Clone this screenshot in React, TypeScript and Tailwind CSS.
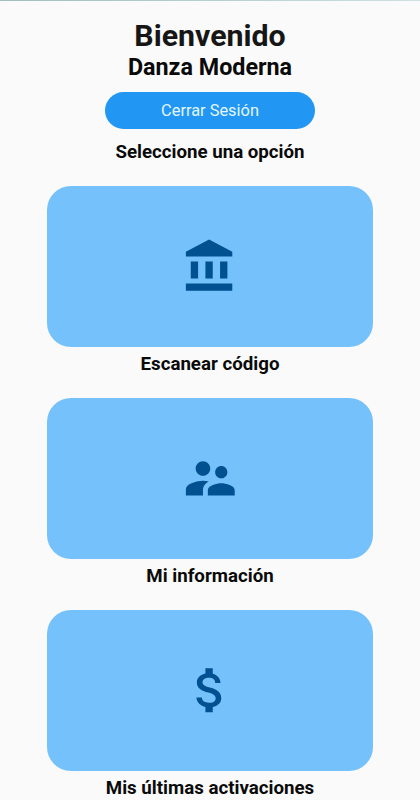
const options = [
  {
    label: 'Escanear código',
    icon: 'M4 10v7h3v-7H4zm6 0v7h3v-7h-3zM2 22h19v-3H2v3zm14-12v7h3v-7h-3zm-4.5-9L2 6v2h19V6l-9.5-5z',
  },
  {
    label: 'Mi información',
    icon: 'M16.5 12c1.38 0 2.49-1.12 2.49-2.5S17.88 7 16.5 7C15.12 7 14 8.12 14 9.5s1.12 2.5 2.5 2.5zM9 11c1.66 0 2.99-1.34 2.99-3S10.66 5 9 5C7.34 5 6 6.34 6 8s1.34 3 3 3zm7.5 3c-1.83 0-5.5.92-5.5 2.75V19h11v-2.25c0-1.83-3.67-2.75-5.5-2.75zM9 13c-2.33 0-7 1.17-7 3.5V19h7v-2.25c0-.85.33-2.34 2.37-3.47C10.5 13.1 9.66 13 9 13z',
  },
  {
    label: 'Mis últimas activaciones',
    icon: 'M11.8 10.9c-2.27-.59-3-1.2-3-2.15 0-1.09 1.01-1.85 2.7-1.85 1.78 0 2.44.85 2.5 2.1h2.21c-.14-1.72-1.12-3.3-3.21-3.81V3h-3v2.16c-1.94.42-3.5 1.68-3.5 3.61 0 2.31 1.91 3.46 4.7 4.13 2.5.6 3 1.48 3 2.41 0 .69-.49 1.79-2.7 1.79-2.06 0-2.87-.92-2.98-2.1h-2.2c.12 2.19 1.76 3.42 3.68 3.83V21h3v-2.15c1.95-.37 3.5-1.5 3.5-3.55 0-2.84-2.43-3.81-4.7-4.4z',
  },
];

export default function App() {
  return (
    <div className="flex h-[800px] w-full flex-col items-center overflow-hidden bg-[#fafafa] font-['Roboto',sans-serif] text-[#0a0a0a]">
      {/* Status bar edge */}
      <div className="h-px w-full shrink-0 bg-gradient-to-r from-[#a3bcbf] to-[#cfe0e0]" />

      <h1 className="mt-[17px] text-[30.3px] leading-9 font-bold text-[#161616]">Bienvenido</h1>
      <h2 className="text-[23.3px] leading-[26px] font-bold">Danza Moderna</h2>
      <button className="mt-[11.5px] h-[37px] w-[210px] shrink-0 rounded-full bg-[#2196f3] pt-0.5 text-[16.4px] text-[#e3f6ff]">
        Cerrar Sesión
      </button>
      <p className="mt-[11.5px] text-[18.7px] leading-6 font-bold">Seleccione una opción</p>

      <div className="mt-[21.7px] flex flex-col gap-[23px]">
        {options.map(option => (
          <div key={option.label} className="flex h-[189.2px] shrink-0 flex-col items-center">
            <button className="flex h-[161px] w-[326.6px] shrink-0 items-center justify-center rounded-3xl bg-[#75c1fb]">
              <svg viewBox="0 0 24 24" className="size-[58.6px] fill-[#01508f]">
                <path d={option.icon} />
              </svg>
            </button>
            <span className="mt-[5px] text-[18.7px] leading-6 font-bold">{option.label}</span>
          </div>
        ))}
      </div>
    </div>
  );
}
